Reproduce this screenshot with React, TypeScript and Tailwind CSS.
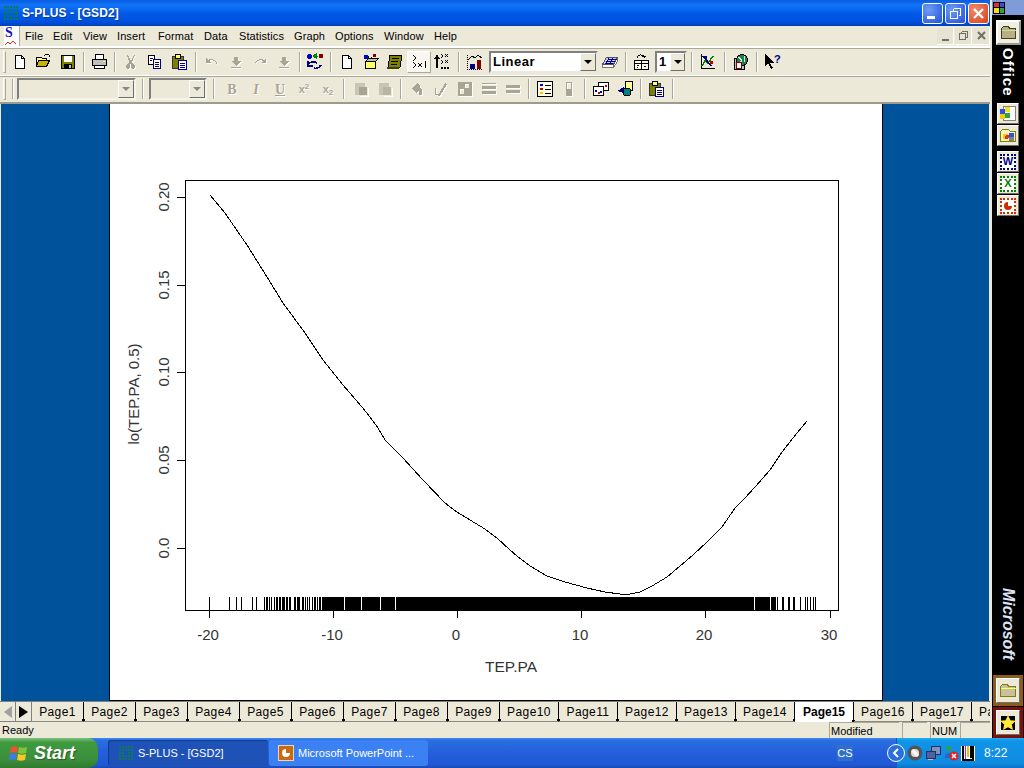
import type { ReactNode } from 'react';

const GRAY = '#a8a595';

const menuItems: [string, string][] = [
  ['File', 'w-[28px]'],
  ['Edit', 'w-[30px]'],
  ['View', 'w-[34px]'],
  ['Insert', 'w-[41px]'],
  ['Format', 'w-[46px]'],
  ['Data', 'w-[35px]'],
  ['Statistics', 'w-[55px]'],
  ['Graph', 'w-[41px]'],
  ['Options', 'w-[49px]'],
  ['Window', 'w-[50px]'],
  ['Help', 'w-[30px]'],
];

const curve = [
  [210, 195], [225, 213], [247, 245], [267, 277], [283, 303], [305, 333], [323, 360], [343, 385], [362, 407], [370, 417],
  [378, 428], [385, 440], [403, 458], [423, 480], [445, 503], [457, 512], [470, 520], [485, 529], [497, 538], [510, 550],
  [517, 556], [530, 566], [547, 576], [565, 582], [587, 588], [605, 592], [620, 594], [630, 594], [640, 592], [652, 586],
  [667, 577], [680, 566], [693, 555], [707, 542], [722, 527], [735, 508], [745, 498], [755, 487], [770, 470], [782, 452],
  [797, 433], [807, 421],
];

const rugLines = [
  209, 229, 236, 241, 252, 256, 264, 266, 267, 269, 271, 274, 276, 277, 279, 280, 282, 283, 284, 286, 287, 289, 290, 294,
  295, 297, 298, 299, 302, 303, 305, 307, 309, 312, 314, 315, 317, 319, 320, 322, 777, 782, 783, 788, 789, 793, 794, 800,
  805, 807, 810, 813, 815,
];

const rugBlocks = [
  [323, 344], [345, 361], [362, 380], [381, 395], [396, 754], [755, 770], [771, 776],
];

const xTicks: [number, string][] = [[209, '-20'], [333, '-10'], [457, '0'], [581, '10'], [705, '20'], [830, '30']];
const yTicks: [number, string][] = [[197, '0.20'], [285, '0.15'], [372, '0.10'], [460, '0.05'], [548, '0.0']];

const pageTabs = [
  'Page1', 'Page2', 'Page3', 'Page4', 'Page5', 'Page6', 'Page7', 'Page8', 'Page9', 'Page10', 'Page11', 'Page12', 'Page13',
  'Page14', 'Page15', 'Page16', 'Page17', 'Page18',
];

const Ico = ({ children, size = 16 }: { children: ReactNode; size?: number }) => (
  <svg width={size} height={size} viewBox={size === 18 ? '0 0 18 18' : '0 0 16 16'} shapeRendering="crispEdges">
    {children}
  </svg>
);

// disabled toolbar glyph: grey with a white shadow
const Dis = ({ d }: { d: string }) => (
  <Ico>
    <path d={d} transform="translate(1 1)" fill="#fff" />
    <path d={d} fill={GRAY} />
  </Ico>
);

const Tb = ({ children, className = 'w-[24px]' }: { children: ReactNode; className?: string }) => (
  <div className={`${className} h-[22px] flex items-center justify-center shrink-0`}>{children}</div>
);

const Sep = ({ className = 'mx-[3px]' }: { className?: string }) => (
  <div className={`w-[2px] h-[20px] border-l border-r border-l-[#aca899] border-r-white shrink-0 ${className}`} />
);

const Grip = ({ className = '' }: { className?: string }) => (
  <div className={`w-[3px] h-[22px] bg-[#ece9d8] border-l border-t border-white border-b border-r border-b-[#aca899] border-r-[#aca899] shrink-0 ${className}`} />
);

const NewIcon = () => (
  <Ico>
    <path d="M3.500 1.500h6l3 3v10h-9z" fill="#fff" stroke="#000" />
    <path d="M9.500 1.500v3h3" fill="none" stroke="#000" />
  </Ico>
);
const OpenIcon = () => (
  <Ico size={18}>
    <path d="M1.500 4.500h5l1 1h4v2h-8l-2 6z" fill="#ffff99" stroke="#000" />
    <path d="M3.500 7.500h11l-3 6h-10z" fill="#c8b400" stroke="#000" />
    <path d="M9 3c2-2 3-2 5-1l1 2" fill="none" stroke="#000" />
  </Ico>
);
const SaveIcon = () => (
  <Ico>
    <path d="M1.500 1.500h13v13h-13z" fill="#808000" stroke="#000" />
    <path d="M4 2h8v6H4z" fill="#fff" />
    <path d="M4 10h8v5H4z" fill="#000" />
    <path d="M9 11h2v3H9z" fill="#c0c0c0" />
  </Ico>
);
const PrintIcon = () => (
  <Ico size={18}>
    <path d="M4.500 1.500h8v5h-8z" fill="#fff" stroke="#000" />
    <path d="M1.500 6.500h14v6h-14z" fill="#c0c0c0" stroke="#000" />
    <path d="M3.500 12.500h10v3h-10z" fill="#fff" stroke="#000" />
    <path d="M12 8h2v1h-2z" fill="#ffff00" />
  </Ico>
);
const CopyIcon = () => (
  <Ico>
    <path d="M1.500 1.500h6v9h-6z" fill="#fff" stroke="#000" />
    <path d="M6.500 5.500h7v9h-7z" fill="#fff" stroke="#000080" />
    <path d="M8 8h4M8 10h4M8 12h4M3 4h3M3 6h2" stroke="#000080" fill="none" />
  </Ico>
);
const PasteIcon = () => (
  <Ico size={18}>
    <path d="M1.500 3.500h11v12h-11z" fill="#808000" stroke="#333" />
    <path d="M4.500 1.500h5v4h-5z" fill="#ffff66" stroke="#000" />
    <path d="M7.500 7.500h8v9h-8z" fill="#fff" stroke="#000080" />
    <path d="M9 10h5M9 12h5M9 14h5" stroke="#000080" fill="none" />
  </Ico>
);
const ObjectIcon = () => (
  <Ico size={18}>
    <circle cx="3.500" cy="3.500" r="2.500" fill="#0000d0" />
    <path d="M13 1h4v4h-4z" fill="#800000" />
    <path d="M7 3h5M7 3l3-2v4z" stroke="#008000" fill="#00c000" />
    <path d="M2 12c1-3 6-4 9-2M2 8v5h5" stroke="#000080" fill="none" strokeWidth="1.500" />
    <path d="M8 15c3 1 5 0 7-3" stroke="#000080" fill="none" strokeWidth="1.500" />
  </Ico>
);
const NewGraphIcon = () => (
  <Ico size={18}>
    <circle cx="4" cy="4" r="2.500" fill="#0000d0" />
    <path d="M11 1h3v3h-3z" fill="#800000" />
    <path d="M3.500 8.500h10v7h-10z" fill="#ffff66" stroke="#000" />
    <path d="M7 3l-1 4M9 4l2 3" stroke="#000" fill="none" />
    <path d="M3.500 8.500l3-3h10l-3 3z" fill="#c0c0a0" stroke="#000" />
  </Ico>
);
const ScrollIcon = () => (
  <Ico size={18}>
    <path d="M4 2h12l-2 12H2z" fill="#808000" stroke="#000" />
    <path d="M6 5h7M5 8h7M5 11h6" stroke="#000" fill="none" />
    <path d="M1 14h12v2H1z" fill="#404000" />
  </Ico>
);
const RunIcon = () => (
  <Ico size={18}>
    <path d="M3 2l3 3-3 3M3 9l3 3-3 3" fill="none" stroke="#000" />
    <path d="M8 10l4 4M12 10l-4 4M15 8v7" fill="none" stroke="#000" />
  </Ico>
);
const RunAllIcon = () => (
  <Ico size={18}>
    <path d="M3 3v12M1 6l2-3 2 3" fill="none" stroke="#000" strokeWidth="1.500" />
    <path d="M7 1l2 2-2 2M7 7l2 2-2 2M11 1l3 3M14 1l-3 3M11 7l3 3M14 7l-3 3" fill="none" stroke="#000" />
    <path d="M7 14h2v2H7zM10 14h2v2h-2zM13 14h2v2h-2z" fill="#000" />
  </Ico>
);
const BigGraphIcon = () => (
  <Ico size={18}>
    <path d="M1.500 1.500v15h15" fill="none" stroke="#000" strokeDasharray="1 1" />
    <path d="M2 7l4-4 3 2 3-3 4 3" fill="none" stroke="#000" />
    <path d="M4 11h5v5H4z" fill="#000080" />
    <path d="M11 7h4v9h-4z" fill="#800000" />
  </Ico>
);
const GridIcon = () => (
  <Ico size={18}>
    <path d="M1.500 11.500l4-7h11l-4 7z" fill="#c8ccf0" stroke="#555" />
    <path d="M1.500 11.500v3h11v-3M12.500 14.500l4-6v-4" fill="#fff" stroke="#777" />
    <path d="M5 8h9M7 6h9M4 10h8M8 5l-3 6M12 5l-3 6" stroke="#000080" fill="none" />
  </Ico>
);
const SheetIcon = () => (
  <Ico size={18}>
    <path d="M1.500 7.500h14v9h-14z" fill="#ffffe0" stroke="#000" />
    <path d="M1.500 7.500h14v3h-14zM8.500 7.500v9" fill="none" stroke="#000" />
    <path d="M4 12h2v1H4zM11 13h2v1h-2zM4 14h1v1H4z" fill="#000080" />
    <path d="M4 5c1-3 4-4 7-2l-2 0M11 3v2" fill="none" stroke="#000" />
  </Ico>
);
const ChartWizard = () => (
  <Ico size={18}>
    <path d="M2 1v14h14" fill="none" stroke="#000" />
    <path d="M3 13l3-5 3 2 5-7" fill="none" stroke="#008000" strokeWidth="1.500" />
    <path d="M4 3l8 10M4 4h3v3" fill="none" stroke="#000080" strokeWidth="1.500" />
    <path d="M11 8h3v3h-3z" fill="#c00000" />
  </Ico>
);
const GlobeIcon = () => (
  <Ico size={18}>
    <path d="M2 5h10v11H2z" fill="#c0c0c0" stroke="#000" />
    <circle cx="10" cy="7" r="5.500" fill="#208040" stroke="#000" />
    <path d="M6 4l4 3-2 3M12 3l1 6" stroke="#e0e0ff" fill="none" />
    <path d="M4 9h5v6H4z" fill="#fff" stroke="#800000" />
  </Ico>
);
const HelpIcon = () => (
  <Ico size={18}>
    <path d="M1 1v12l3-3 3 6 2-1-3-5h4z" fill="#000" />
    <text x="10" y="10" fontSize="11" fontWeight="700" fill="#000080" fontFamily="'Liberation Sans', sans-serif">?</text>
  </Ico>
);
const ThemeIcon = ({ fill }: { fill: string }) => (
  <Ico>
    <path d="M2 2h10v6h-3v6H2z" fill="#c8c5b5" />
    <path d="M6 6h8v8H6z" fill={fill} />
    <path d="M15 7v8H7" fill="none" stroke="#fff" />
  </Ico>
);
const LegendIcon = () => (
  <Ico size={18}>
    <path d="M1.500 1.500h15v15h-15z" fill="#ffffe8" stroke="#000" />
    <path d="M4 4h3v2H4z" fill="#0000d0" />
    <path d="M4 8h3v2H4z" fill="#c00000" />
    <path d="M4 12h3v2H4z" fill="#e8d000" />
    <path d="M9 5h6M9 9h6M9 13h6" stroke="#000" fill="none" />
  </Ico>
);
const CardsIcon = () => (
  <Ico size={18}>
    <path d="M6.500 2.500h10v8h-10z" fill="#fff" stroke="#000" />
    <path d="M1.500 6.500h10v9h-10z" fill="#fff" stroke="#000" />
    <path d="M3 10h2v2H3zM8 11h2v2H8z" fill="#0000d0" />
    <path d="M6 12h2v2H6zM13 5h2v2h-2z" fill="#c00000" />
  </Ico>
);
const ShapesIcon = () => (
  <Ico size={18}>
    <path d="M9 1h7v9H9z" fill="#ffff99" stroke="#000" />
    <path d="M1 11l7-4v6z" fill="#000080" />
    <circle cx="11" cy="12" r="4" fill="#008080" stroke="#000" />
  </Ico>
);
const SplusIcon = () => (
  <svg width="16" height="16" viewBox="0 0 16 16" shapeRendering="crispEdges">
    {[1, 4, 7, 10, 13].flatMap((x) =>
      [1, 4, 7, 10, 13].map((y) =>
        x === 7 && y === 7 ? null : <rect key={`${x}-${y}`} x={x} y={y} width="2" height="2" fill="#0a7a5a" />,
      ),
    )}
  </svg>
);
const Tile = ({ children }: { children: ReactNode }) => (
  <div className="w-[22px] h-[21px] bg-[#ece9d8] border-t border-l border-white border-r border-b border-r-[#716f64] border-b-[#716f64] flex items-center justify-center">
    {children}
  </div>
);
const MsTile = ({ color, children }: { color: string; children: ReactNode }) => (
  <Tile>
    <div className="w-[16px] h-[16px] border-2 border-dotted bg-white flex items-center justify-center" style={{ borderColor: color }}>
      {children}
    </div>
  </Tile>
);
const PlotArea = () => (
  <svg width="772" height="596" viewBox="110 104 772 596" className="block">
    <rect x="185.500" y="180.500" width="653" height="430" fill="none" stroke="#000" shapeRendering="crispEdges" />
    {xTicks.map(([x, label]) => (
      <g key={label}>
        <line x1={x + 0.5} x2={x + 0.5} y1="611" y2="618" stroke="#000" shapeRendering="crispEdges" />
        <text x={x - 1} y="640" textAnchor="middle" fontSize="15" fill="#333" fontFamily="'Liberation Sans', sans-serif">{label}</text>
      </g>
    ))}
    {yTicks.map(([y, label]) => (
      <g key={label}>
        <line x1="177" x2="185" y1={y + 0.5} y2={y + 0.5} stroke="#000" shapeRendering="crispEdges" />
        <text x="169" y={y} textAnchor="middle" fontSize="15" fill="#333" transform={`rotate(-90 169 ${y})`} fontFamily="'Liberation Sans', sans-serif">{label}</text>
      </g>
    ))}
    <text x="511" y="672" textAnchor="middle" fontSize="15.500" fill="#333" fontFamily="'Liberation Sans', sans-serif">TEP.PA</text>
    <text x="139" y="394" textAnchor="middle" fontSize="15" fill="#333" transform="rotate(-90 139 394)" fontFamily="'Liberation Sans', sans-serif">lo(TEP.PA, 0.5)</text>
    <polyline points={curve.map((p) => p.join(',')).join(' ')} fill="none" stroke="#000" strokeWidth="1" shapeRendering="crispEdges" />
    {rugLines.map((x) => (
      <line key={x} x1={x + 0.5} x2={x + 0.5} y1="597" y2="610" stroke="#000" shapeRendering="crispEdges" />
    ))}
    {rugBlocks.map(([a, b]) => (
      <rect key={a} x={a} y="597" width={b - a} height="13" fill="#000" shapeRendering="crispEdges" />
    ))}
  </svg>
);

const CtlBtn = ({ children, red = false }: { children: ReactNode; red?: boolean }) => (
  <div
    className={`w-[21px] h-[21px] rounded-[3px] border border-white flex items-center justify-center ${
      red ? 'bg-[radial-gradient(circle_at_30%_30%,#f08a6c,#d8401c)]' : 'bg-[radial-gradient(circle_at_30%_30%,#6f9cf5,#2250d8)]'
    }`}
  >
    {children}
  </div>
);

const MdiBtn = ({ children }: { children: ReactNode }) => (
  <div className="w-[17px] h-[17px] bg-[#e6e3d3] border-b border-r border-b-white border-r-white rounded-[1px] flex items-center justify-center">
    {children}
  </div>
);

export default function App() {
  return (
    <div className="w-[1024px] h-[768px] overflow-hidden flex flex-col font-['Liberation_Sans',sans-serif] text-black">
      <div className="flex h-[738px]">
        {/* application window */}
        <div className="w-[992px] flex flex-col border-r-2 border-r-[#ece9d8]">
          <div className="h-[26px] shrink-0 flex items-center bg-[linear-gradient(to_bottom,#0a5ae0_0%,#0f74f6_20%,#0058e6_55%,#0050dc_85%,#0040b8_100%)] pl-[3px] pr-[1px]">
            <SplusIcon />
            <span className="ml-[3px] text-white font-bold text-[12px] tracking-[0.1px] [text-shadow:1px_1px_0_#0a3aa0]">S-PLUS - [GSD2]</span>
            <div className="ml-auto flex gap-[2px]">
              <CtlBtn><div className="w-[8px] h-[3px] bg-white mt-[8px] mr-[4px]" /></CtlBtn>
              <CtlBtn>
                <svg width="13" height="13" viewBox="0 0 13 13" shapeRendering="crispEdges"><path d="M4.500 1.500h7v7h-2M4.500 1.500v2M1.500 4.500h7v7h-7z" fill="none" stroke="#fff" /></svg>
              </CtlBtn>
              <CtlBtn red>
                <svg width="13" height="13" viewBox="0 0 13 13"><path d="M2 2l9 9M11 2l-9 9" stroke="#fff" strokeWidth="2.200" /></svg>
              </CtlBtn>
            </div>
          </div>

          <div className="h-[20px] shrink-0 flex items-center bg-[#ece9d8] pl-[4px]">
            <div className="w-[16px] h-[20px] bg-white border-r border-[#aaa] mr-[5px]">
              <span className="block text-[#1010d0] font-bold text-[14px] leading-[14px] font-['Liberation_Serif',serif] ml-[1px]">S</span>
              <svg width="15" height="6" viewBox="0 0 15 6" className="block"><path d="M1 5l3-3 2 2 3-3 3 3" stroke="#e02020" fill="none" /></svg>
            </div>
            {menuItems.map(([label, w]) => (
              <span key={label} className={`${w} text-[11px] tracking-[0.1px] leading-[20px] shrink-0`}>{label}</span>
            ))}
            <div className="ml-auto flex gap-[1px]">
              <MdiBtn><div className="w-[7px] h-[2px] bg-[#716f64] mt-[8px]" /></MdiBtn>
              <MdiBtn>
                <svg width="11" height="11" viewBox="0 0 11 11" shapeRendering="crispEdges"><path d="M3.500 1.500h6v6h-2M3.500 1.500v2M1.500 3.500h6v6h-6z" fill="none" stroke="#716f64" /></svg>
              </MdiBtn>
              <MdiBtn>
                <svg width="9" height="9" viewBox="0 0 9 9"><path d="M1 1l7 7M8 1l-7 7" stroke="#716f64" strokeWidth="2" /></svg>
              </MdiBtn>
            </div>
          </div>

          <div className="h-[29px] shrink-0 flex items-center bg-[#ece9d8] border-t-2 border-t-[#fff] pl-[3px] shadow-[inset_0_1px_0_#aca899]">
            <Grip className="mr-[2px]" />
            <Tb><NewIcon /></Tb>
            <Tb><OpenIcon /></Tb>
            <Tb><SaveIcon /></Tb>
            <Sep />
            <Tb><PrintIcon /></Tb>
            <Sep className="ml-[2px] mr-[3px]" />
            <Tb><Dis d="M5 1l3 6 3-6h1l-3 7 1 2a2.500 2.500 0 1 1-2 1L8 9l-1 2a2.500 2.500 0 1 1-2-1l1-2-2-7z" /></Tb>
            <Tb><CopyIcon /></Tb>
            <Tb className="w-[25px]"><PasteIcon /></Tb>
            <Sep />
            <Tb><Dis d="M2 4v5h5l-2-2c2-1 5-1 7 1l1 3c0-5-5-7-9-5z" /></Tb>
            <Tb><Dis d="M6 3h4v4h3l-5 5-5-5h3zM3 13h10v1H3z" /></Tb>
            <Tb><Dis d="M14 4v5H9l2-2c-2-1-5-1-7 1l-1 3c0-5 5-7 9-5z" /></Tb>
            <Tb><Dis d="M6 3h4v4h3l-5 5-5-5h3zM3 13h10v1H3z" /></Tb>
            <Sep className="ml-[3px] mr-[2px]" />
            <Tb><ObjectIcon /></Tb>
            <Sep />
            <Tb><NewIcon /></Tb>
            <Tb><NewGraphIcon /></Tb>
            <Tb><ScrollIcon /></Tb>
            <Tb className="w-[24px] bg-[#f7f6f0] border border-white border-r-[#aca899] border-b-[#aca899]"><RunIcon /></Tb>
            <Tb><RunAllIcon /></Tb>
            <Sep />
            <Tb><BigGraphIcon /></Tb>
            <div className="w-[109px] h-[22px] shrink-0 ml-[2px] bg-white border-2 border-t-[#808080] border-l-[#808080] border-b-[#ece9d8] border-r-[#ece9d8] flex items-center">
              <span className="flex-1 pl-[2px] font-bold text-[13px] tracking-[0.5px] leading-none">Linear</span>
              <div className="w-[16px] h-[18px] bg-[#ece9d8] border border-white border-r-[#716f64] border-b-[#716f64] flex items-center justify-center">
                <div className="w-0 h-0 border-x-[4px] border-x-transparent border-t-[4px] border-t-black" />
              </div>
            </div>
            <Tb><GridIcon /></Tb>
            <Sep />
            <Tb><SheetIcon /></Tb>
            <div className="w-[32px] h-[22px] shrink-0 ml-[1px] bg-white border-2 border-t-[#808080] border-l-[#808080] border-b-[#ece9d8] border-r-[#ece9d8] flex items-center">
              <span className="flex-1 pl-[2px] font-bold text-[13px] leading-none">1</span>
              <div className="w-[15px] h-[18px] bg-[#ece9d8] border border-white border-r-[#716f64] border-b-[#716f64] flex items-center justify-center">
                <div className="w-0 h-0 border-x-[4px] border-x-transparent border-t-[4px] border-t-black" />
              </div>
            </div>
            <Sep className="ml-[4px] mr-[3px]" />
            <Tb><ChartWizard /></Tb>
            <Sep className="ml-[4px] mr-[3px]" />
            <Tb><GlobeIcon /></Tb>
            <Sep />
            <Tb><HelpIcon /></Tb>
          </div>

          <div className="h-[29px] shrink-0 flex items-center bg-[#ece9d8] border-t border-t-[#fff] border-b-2 border-b-[#9d9b8c] pl-[3px] shadow-[inset_0_1px_0_#aca899]">
            <Grip />
            <Sep className="ml-[6px] mr-[3px]" />
            <div className="w-[119px] h-[22px] shrink-0 bg-[#ece9d8] border-2 border-t-[#808080] border-l-[#808080] border-b-[#f5f4ec] border-r-[#f5f4ec] flex justify-end">
              <div className="w-[16px] h-[18px] bg-[#ece9d8] border border-white border-r-[#716f64] border-b-[#716f64] flex items-center justify-center">
                <div className="w-0 h-0 border-x-[4px] border-x-transparent border-t-[4px] border-t-[#888]" />
              </div>
            </div>
            <Sep className="ml-[6px] mr-[5px]" />
            <div className="w-[58px] h-[22px] shrink-0 bg-[#ece9d8] border-2 border-t-[#808080] border-l-[#808080] border-b-[#f5f4ec] border-r-[#f5f4ec] flex justify-end">
              <div className="w-[16px] h-[18px] bg-[#ece9d8] border border-white border-r-[#716f64] border-b-[#716f64] flex items-center justify-center">
                <div className="w-0 h-0 border-x-[4px] border-x-transparent border-t-[4px] border-t-[#888]" />
              </div>
            </div>
            <Sep className="ml-[6px] mr-[5px]" />
            <Tb><span className="font-bold font-['Liberation_Serif',serif] text-[14px] text-[#a8a595] [text-shadow:1px_1px_0_#fff]">B</span></Tb>
            <Tb><span className="font-bold italic font-['Liberation_Serif',serif] text-[14px] text-[#a8a595] [text-shadow:1px_1px_0_#fff]">I</span></Tb>
            <Tb><span className="font-bold underline font-['Liberation_Serif',serif] text-[14px] text-[#a8a595] [text-shadow:1px_1px_0_#fff]">U</span></Tb>
            <Tb><span className="text-[11px] font-bold text-[#a8a595] [text-shadow:1px_1px_0_#fff]">x<sup className="text-[8px]">2</sup></span></Tb>
            <Tb><span className="text-[11px] font-bold text-[#a8a595] [text-shadow:1px_1px_0_#fff]">x<sub className="text-[8px]">2</sub></span></Tb>
            <Sep className="ml-[3px] mr-[4px]" />
            <Tb><ThemeIcon fill="#a8a595" /></Tb>
            <Tb><ThemeIcon fill="#b8b5a5" /></Tb>
            <Sep />
            <Tb><Dis d="M3 8l5-6 3 3-1 1 3 2v6h-3V9L8 12z" /></Tb>
            <Tb><Dis d="M2 14V7h1v6h3l6-11 2 1-7 12z" /></Tb>
            <Tb><Dis d="M1 1h14v14H1zM8 3v4h4V3zM3 8v5h4V8z" /></Tb>
            <Tb><Dis d="M1 2h14v1H1zM1 5h14v3H1zM1 10h14v3H1z" /></Tb>
            <Tb><Dis d="M1 4h14v3H1zM1 9h14v3H1z" /></Tb>
            <Sep />
            <Tb><LegendIcon /></Tb>
            <Tb><Dis d="M5 1h6v14H5zM6 2v6h4V2z" /></Tb>
            <Sep />
            <Tb><CardsIcon /></Tb>
            <Tb><ShapesIcon /></Tb>
            <Sep />
            <Tb><PasteIcon /></Tb>
            <Sep />
          </div>

          {/* document area */}
          <div className="flex-1 min-h-0 bg-[#00529b] pl-[108px] border-l border-l-[#ece9d8] border-r border-r-[#ece9d8]">
            <div className="w-[774px] h-[597px] bg-white border-l border-r border-b border-black">
              <PlotArea />
            </div>
          </div>

          <div className="h-[21px] shrink-0 flex bg-[#ece9d8] overflow-hidden border-t border-t-[#808080]">
            <div className="w-[16px] h-[20px] shrink-0 border-r border-b border-[#808080] flex items-center justify-center">
              <div className="w-0 h-0 border-y-[6px] border-y-transparent border-r-[8px] border-r-[#a0a0a0]" />
            </div>
            <div className="w-[16px] h-[20px] shrink-0 border-r border-b border-[#808080] flex items-center justify-center">
              <div className="w-0 h-0 border-y-[6px] border-y-transparent border-l-[9px] border-l-black" />
            </div>
            {pageTabs.map((label, i) => {
              const active = label === 'Page15';
              return (
                <div
                  key={label}
                  className={`${i < 9 ? 'w-[52px]' : 'w-[59px]'} shrink-0 h-[20px] relative text-center text-[12px] leading-[20px] border-r border-black ${
                    active ? 'bg-white font-bold' : 'border-b border-b-[#8a8a80] tracking-[0.4px]'
                  }`}
                >
                  {label}
                  <span className="absolute -right-[2px] bottom-0 w-[3px] h-[2px] bg-black" />
                </div>
              );
            })}
          </div>

          <div className="h-[16px] shrink-0 flex items-center bg-[#ece9d8] text-[11px] leading-[16px] pl-[2px]">
            <span>Ready</span>
            <div className="ml-auto flex gap-[3px] h-[16px]">
              <div className="w-[70px] border-t border-l border-[#aca899] pl-[1px]">Modified</div>
              <div className="w-[25px] border-t border-l border-[#aca899]" />
              <div className="w-[27px] border-t border-l border-[#aca899] pl-[1px]">NUM</div>
              <div className="w-[30px] border-t border-l border-[#aca899]" />
            </div>
          </div>
        </div>

        {/* office shortcut bar */}
        <div className="w-[32px] bg-black flex flex-col items-center">
          <div className="w-full h-[15px] bg-[#7f9bd8] flex items-center pl-[1px]">
            <div className="w-[12px] h-[12px] grid grid-cols-2 gap-[1px] bg-black p-[1px]">
              <div className="bg-[#e03030]" />
              <div className="bg-[#3050e0]" />
              <div className="bg-[#f0e020]" />
              <div className="bg-[#30a040]" />
            </div>
          </div>
          <div className="w-[25px] h-[25px] mt-[5px] bg-[#f0eee0] border-2 border-white border-r-[#999] border-b-[#999] flex items-center justify-center">
            <svg width="19" height="17" viewBox="0 0 19 17" shapeRendering="crispEdges">
              <path d="M2.500 4.500l2-2h5l1 2h6v10h-14z" fill="#b8b080" stroke="#404020" />
              <path d="M2.500 6.500h14" stroke="#d8d8a0" />
            </svg>
          </div>
          <span className="[writing-mode:vertical-rl] text-white font-bold text-[15px] tracking-[1px] leading-none mt-[3px] h-[46px]">Office</span>
          <div className="mt-[9px] flex flex-col gap-[1px]">
            <Tile>
              <svg width="18" height="17" viewBox="0 0 18 17" shapeRendering="crispEdges">
                <path d="M4.500 1.500h12v14h-12z" fill="#fff" stroke="#808080" />
                <path d="M1 4h5v5H1z" fill="#3050e0" />
                <path d="M6 2h5v5H6z" fill="#f0e020" />
                <path d="M1 9h5v5H1z" fill="#e8d000" />
                <path d="M6 8h5v5H6z" fill="#30a040" />
              </svg>
            </Tile>
            <Tile>
              <svg width="18" height="17" viewBox="0 0 18 17" shapeRendering="crispEdges">
                <path d="M1.500 4.500l2-2h6l2 2h5v10h-15z" fill="#f8f4c0" stroke="#808000" />
                <path d="M4 7h5v5H4z" fill="#e8d000" />
                <circle cx="8" cy="10" r="2" fill="#e03030" />
                <path d="M10 6h5v4h-5z" fill="#3050e0" />
                <path d="M10 10h5v4h-5z" fill="#808080" />
              </svg>
            </Tile>
          </div>
          <div className="mt-[5px] flex flex-col gap-[1px]">
            <MsTile color="#000080"><span className="text-[11px] font-bold text-[#000080] leading-none">W</span></MsTile>
            <MsTile color="#008000"><span className="text-[11px] font-bold text-[#008000] leading-none">X</span></MsTile>
            <MsTile color="#c83000">
              <svg width="10" height="10" viewBox="0 0 10 10"><path d="M5 1a4 4 0 1 0 4 4H5z" fill="#c83000" /></svg>
            </MsTile>
          </div>
          <span className="mt-auto [writing-mode:vertical-rl] text-[#dfe3f5] font-bold italic text-[16px] leading-none h-[76px] mb-[11px]">Microsoft</span>
          <div className="w-[30px] h-[31px] bg-[#8a5a20] p-[3px]">
            <div className="w-full h-full bg-[#ece9d8] border border-white border-r-[#716f64] border-b-[#716f64] flex items-center justify-center">
              <svg width="18" height="15" viewBox="0 0 18 15" shapeRendering="crispEdges"><path d="M1.500 3.500l2-2h5l1 2h7v10h-15z" fill="#c8c0a0" stroke="#808000" /><path d="M1.500 5.500h15" stroke="#ffff60" /></svg>
            </div>
          </div>
          <div className="w-[30px] h-[31px] bg-[#7a1010] p-[3px] mt-[1px]">
            <div className="w-full h-full bg-[#ece9d8] border border-white border-r-[#716f64] border-b-[#716f64] flex items-center justify-center">
              <svg width="18" height="18" viewBox="0 0 18 18"><path d="M2 2h14v14H2z" fill="#000" /><path d="M9 1l2.400 5.200 5.600.6-4.200 3.800 1.200 5.400L9 13.200 4 16l1.200-5.400L1 6.800l5.600-.6z" fill="#ffe838" /></svg>
            </div>
          </div>
        </div>
      </div>

      {/* taskbar */}
      <div className="h-[30px] shrink-0 flex items-stretch text-white text-[11px] bg-[linear-gradient(to_bottom,#3c8cf0_0%,#2a6ee0_8%,#245edb_50%,#2058d4_90%,#1c48b0_100%)]">
        <div className="w-[98px] shrink-0 flex items-center pl-[9px] rounded-r-[10px] bg-[linear-gradient(to_bottom,#7cc07c_0%,#3f9a3f_15%,#3c8f3c_70%,#2f7a2f_100%)]">
          <svg width="20" height="20" viewBox="0 0 20 20">
            <path d="M2 4c2-1 4-1 7 0l-1 6c-3-1-5-1-7 0z" fill="#e8542c" />
            <path d="M10 4c3 1 5 1 8 0l-1 6c-3 1-5 1-8 0z" fill="#7cc63c" />
            <path d="M1 11c2-1 4-1 6.800 0l-1 6c-3-1-5-1-7 0z" fill="#3c7ce8" />
            <path d="M9 11c3 1 5 1 8 0l-1 6c-3 1-5 1-8 0z" fill="#f8c828" />
          </svg>
          <span className="ml-[5px] italic font-bold text-[18px] [text-shadow:1px_1px_1px_#245a24]">Start</span>
        </div>
        <div className="w-[160px] shrink-0 ml-[10px] my-[2px] flex items-center pl-[10px] rounded-[3px] bg-[#1e52b7] shadow-[inset_1px_1px_1px_#123a90]">
          <SplusIcon />
          <span className="ml-[4px]">S-PLUS - [GSD2]</span>
        </div>
        <div className="w-[159px] shrink-0 ml-[1px] my-[2px] flex items-center pl-[9px] rounded-[3px] bg-[#3c81f3]">
          <div className="w-[16px] h-[16px] bg-[#c86a10] border border-white/70 flex items-center justify-center">
            <svg width="10" height="10" viewBox="0 0 10 10"><path d="M5 1a4 4 0 1 0 4 4H5z" fill="#fff" /></svg>
          </div>
          <span className="ml-[4px] whitespace-nowrap">Microsoft PowerPoint ...</span>
        </div>
        <div className="ml-auto mr-[43px] self-center w-[16px] h-[16px] bg-[#2f6fd0] text-center leading-[16px]">CS</div>
        <div className="w-[128px] shrink-0 flex items-center bg-[linear-gradient(to_bottom,#1cb0f0_0%,#1094e8_10%,#0f8be0_85%,#0c70c8_100%)] border-l border-l-[#0c5cb0]">
          <div className="w-[18px] h-[18px] -ml-[10px] rounded-full bg-[#2a6ee0] border border-white flex items-center justify-center shrink-0">
            <svg width="8" height="10" viewBox="0 0 8 10"><path d="M6 1L2 5l4 4" fill="none" stroke="#fff" strokeWidth="2" /></svg>
          </div>
          <svg width="16" height="16" viewBox="0 0 16 16" className="ml-[2px] shrink-0"><circle cx="8" cy="8" r="7.500" fill="#555" /><circle cx="8" cy="8" r="4" fill="#ddd" /><path d="M4 6l6 6 2-2-6-6z" fill="#fff" /></svg>
          <svg width="16" height="16" viewBox="0 0 16 16" className="ml-[2px] shrink-0" shapeRendering="crispEdges"><path d="M6 1h9v8H6z" fill="#8090c0" stroke="#203060" /><path d="M1 6h9v7H1z" fill="#5060a0" stroke="#203060" /><path d="M3 14h5v1H3z" fill="#c0c0c0" /></svg>
          <svg width="16" height="16" viewBox="0 0 16 16" className="ml-[2px] shrink-0"><circle cx="6" cy="3.500" r="2.500" fill="#30a040" /><path d="M2 11c0-4 8-4 8 0v2H2z" fill="#3060c0" /><circle cx="11" cy="11" r="4.500" fill="#e02020" /><path d="M9 9l4 4M13 9l-4 4" stroke="#fff" strokeWidth="1.500" /></svg>
          <svg width="16" height="16" viewBox="0 0 16 16" className="ml-[1px] shrink-0" shapeRendering="crispEdges"><path d="M1 1h14v15H1z" fill="#fff" /><path d="M2 1h2v13H2zM10 1h2v12h-2z" fill="#000" /><path d="M5 1h1v13H5z" fill="#e000e0" /><path d="M7 1h2v11H7z" fill="#e0c000" /><path d="M12 1h2v15h-2zM2 14h12v2H2z" fill="#000" /></svg>
          <span className="ml-[8px] text-[12px]">8:22</span>
        </div>
      </div>
    </div>
  );
}
